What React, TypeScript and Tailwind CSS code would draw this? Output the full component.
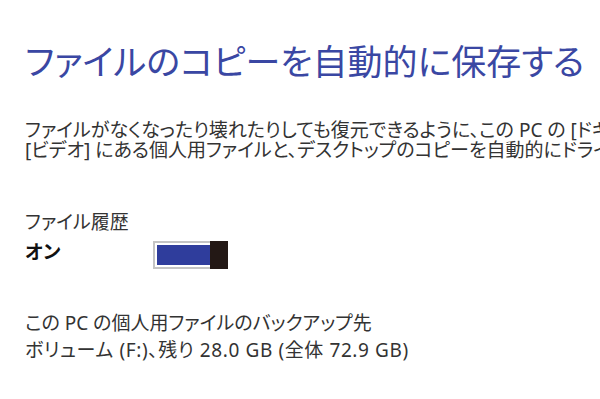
import React from "react";

export default function App() {
  return (
    <div
      className="w-[600px] h-[399px] overflow-hidden bg-white pl-[25px] [font-family:'Noto_Sans','Noto_Sans_CJK_JP',sans-serif] [font-feature-settings:'palt']"
    >
      <h1 className="mt-[36px] text-[35px] leading-[48px] font-normal text-[#3a47a3] whitespace-nowrap [font-family:'Noto_Sans_CJK_JP',sans-serif]">
        ファイルのコピーを自動的に保存する
      </h1>
      <div className="mt-[36px] text-[19px] leading-[20px] text-[#333] whitespace-nowrap">
        <p>ファイルがなくなったり壊れたりしても復元できるように、この PC の [ドキュメント]、[ミュージック]、[ピクチャ]、</p>
        <p>[ビデオ] にある個人用ファイルと、デスクトップのコピーを自動的にドライブに保存します。</p>
      </div>
      <div className="mt-[51px] text-[19px] leading-[22px] text-[#333]">ファイル履歴</div>
      <div className="mt-[8px] flex items-start">
        <span className="w-[128px] text-[19px] leading-[22px] font-bold text-[#111]">オン</span>
        <div className="w-[75px] h-[28px] flex border-2 border-[#c4c4c4] bg-white">
          <div className="flex-1 m-[2px] mr-0 bg-[#2f3d9c]" />
          <div className="w-[18px] -mt-[2px] -mb-[2px] -mr-[2px] bg-[#231815]" />
        </div>
      </div>
      <div className="mt-[41px] text-[19px] leading-[27px] text-[#333] whitespace-nowrap">
        <p>この PC の個人用ファイルのバックアップ先</p>
        <p className="tracking-[0.6px]">ボリューム (F:)、残り 28.0 GB (全体 72.9 GB)</p>
      </div>
    </div>
  );
}
